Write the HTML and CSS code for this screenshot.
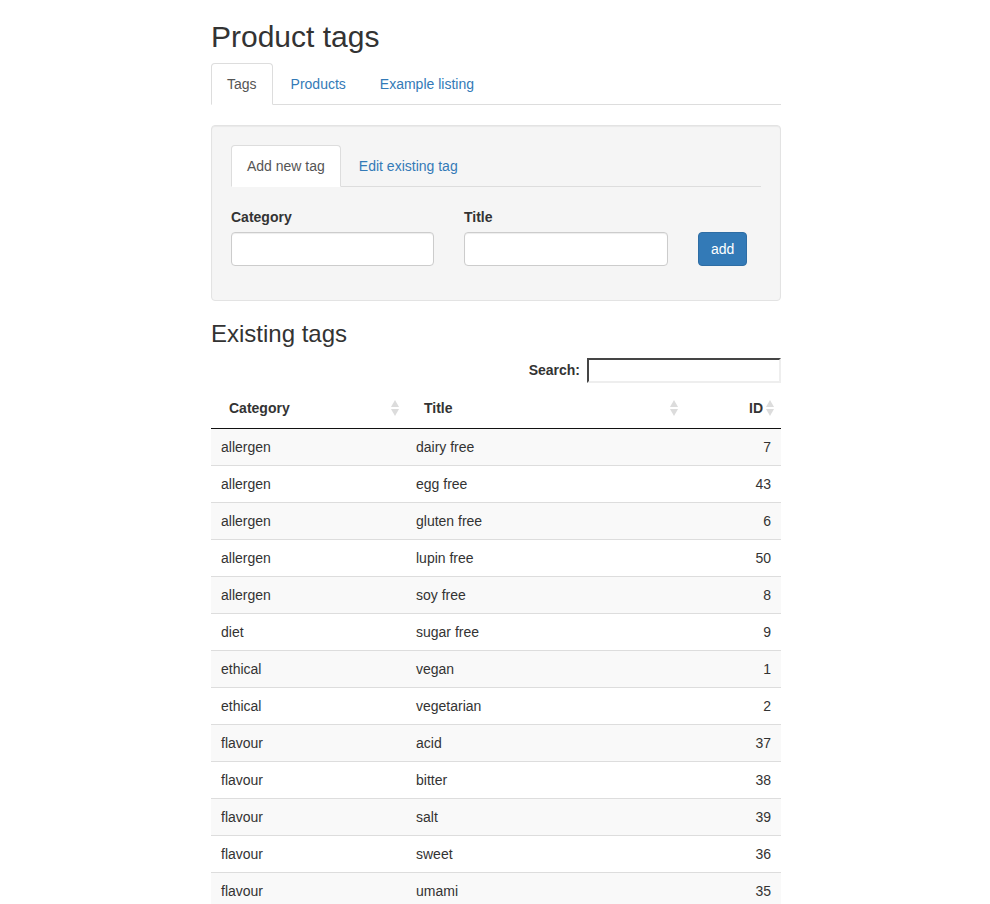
FILE: index.html
```html
<!DOCTYPE html>
<html>
<head>
<meta charset="utf-8">
<title>Product tags</title>
<link rel="stylesheet" href="styles.css">
</head>
<body>
<div class="container">
  <h2 class="title">Product tags</h2>
  <ul class="tabs">
    <li class="tab active"><a>Tags</a></li>
    <li class="tab"><a>Products</a></li>
    <li class="tab"><a>Example listing</a></li>
  </ul>
  <div class="tab-content">
    <div class="well">
      <ul class="tabs">
        <li class="tab active"><a>Add new tag</a></li>
        <li class="tab"><a>Edit existing tag</a></li>
      </ul>
      <div class="form-row">
        <div class="form-group">
          <label class="label">Category</label>
          <input class="input input-cat" type="text">
        </div>
        <div class="form-group">
          <label class="label">Title</label>
          <input class="input input-title" type="text">
        </div>
        <div class="form-group btn-group">
          <button class="btn">add</button>
        </div>
      </div>
    </div>
    <h3 class="section-title">Existing tags</h3>
    <div class="filter">
      <label class="filter-label">Search:</label>
      <input class="filter-input" type="search">
    </div>
    <table class="table">
      <thead>
        <tr>
          <th class="col-cat">Category<span class="sort"></span></th>
          <th class="col-title">Title<span class="sort"></span></th>
          <th class="col-id">ID<span class="sort"></span></th>
        </tr>
      </thead>
      <tbody>
        <tr><td>allergen</td><td>dairy free</td><td class="num">7</td></tr>
        <tr><td>allergen</td><td>egg free</td><td class="num">43</td></tr>
        <tr><td>allergen</td><td>gluten free</td><td class="num">6</td></tr>
        <tr><td>allergen</td><td>lupin free</td><td class="num">50</td></tr>
        <tr><td>allergen</td><td>soy free</td><td class="num">8</td></tr>
        <tr><td>diet</td><td>sugar free</td><td class="num">9</td></tr>
        <tr><td>ethical</td><td>vegan</td><td class="num">1</td></tr>
        <tr><td>ethical</td><td>vegetarian</td><td class="num">2</td></tr>
        <tr><td>flavour</td><td>acid</td><td class="num">37</td></tr>
        <tr><td>flavour</td><td>bitter</td><td class="num">38</td></tr>
        <tr><td>flavour</td><td>salt</td><td class="num">39</td></tr>
        <tr><td>flavour</td><td>sweet</td><td class="num">36</td></tr>
        <tr><td>flavour</td><td>umami</td><td class="num">35</td></tr>
      </tbody>
    </table>
  </div>
</div>
</body>
</html>
```

FILE: styles.css
```css
* { box-sizing: border-box; }
html, body { margin: 0; padding: 0; }
body {
  font-family: "Liberation Sans", Arial, sans-serif;
  font-size: 14px;
  line-height: 20px;
  color: #333;
  background: #fff;
}
.container {
  width: 570px;
  margin: 0 auto;
  position: relative;
  left: 1px;
}
.title {
  font-size: 30px;
  font-weight: 500;
  line-height: 33px;
  margin: 20px 0 10px;
}
.tabs {
  list-style: none;
  margin: 0;
  padding: 0;
  display: flex;
  border-bottom: 1px solid #ddd;
}
.tab {
  margin-right: 2px;
  margin-bottom: -1px;
}
.tab a {
  display: block;
  padding: 10px 15px;
  line-height: 20px;
  color: #337ab7;
  border: 1px solid transparent;
  border-radius: 4px 4px 0 0;
}
.tab.active a {
  color: #555;
  background: #fff;
  border-color: #ddd #ddd transparent;
}
.tab-content { padding-top: 20px; }
.well {
  background: #f5f5f5;
  border: 1px solid #e3e3e3;
  border-radius: 4px;
  padding: 19px;
  box-shadow: inset 0 1px 1px rgba(0,0,0,0.05);
  margin-bottom: 20px;
}
.form-row {
  display: flex;
  gap: 30px;
  align-items: flex-end;
  padding-top: 20px;
}
.form-group {
  display: flex;
  flex-direction: column;
  margin-bottom: 15px;
}
.label {
  font-weight: 700;
  margin-bottom: 5px;
}
.input {
  height: 34px;
  padding: 6px 12px;
  font: inherit;
  border: 1px solid #ccc;
  border-radius: 4px;
  background: #fff;
  box-shadow: inset 0 1px 1px rgba(0,0,0,0.075);
}
.input-cat { width: 203px; }
.input-title { width: 204px; }
.btn {
  height: 34px;
  width: 49px;
  padding: 6px 12px;
  font: inherit;
  color: #fff;
  background: #337ab7;
  border: 1px solid #2e6da4;
  border-radius: 4px;
}
.section-title {
  font-size: 24px;
  font-weight: 500;
  line-height: 26.4px;
  margin: 0 0 10px;
}
.filter {
  display: flex;
  justify-content: flex-end;
  align-items: center;
  gap: 7px;
  height: 26px;
}
.filter-label {
  font-weight: 700;
  font-size: 14px;
}
.filter-input {
  width: 194px;
  height: 25px;
  border: 2px inset #eee;
  border-top-color: #999;
  border-left-color: #999;
  font: inherit;
  padding: 1px 2px;
}
.table {
  width: 100%;
  border-collapse: collapse;
  margin-top: 5px;
}
.table th {
  position: relative;
  font-weight: 700;
  text-align: left;
  padding: 10px 18px;
  line-height: 20px;
  border-bottom: 1px solid #111;
}
.col-cat { width: 195px; }
.col-title { width: 279px; }
.table th.col-id { text-align: right; }
.sort {
  position: absolute;
  right: 6px;
  top: 12px;
  width: 9px;
  height: 16px;
}
.sort::before, .sort::after {
  content: "";
  position: absolute;
  left: 0;
  border-left: 4px solid transparent;
  border-right: 4px solid transparent;
}
.sort::before {
  top: 0;
  border-bottom: 7px solid #dcdcdc;
}
.sort::after {
  top: 9px;
  border-top: 7px solid #dcdcdc;
}
.table td {
  padding: 8px 10px;
  line-height: 20px;
  border-top: 1px solid #ddd;
}
.table tbody tr:first-child td { border-top: none; }
.table tbody tr:nth-child(odd) { background: #f9f9f9; }
.table td.num { text-align: right; }
```
